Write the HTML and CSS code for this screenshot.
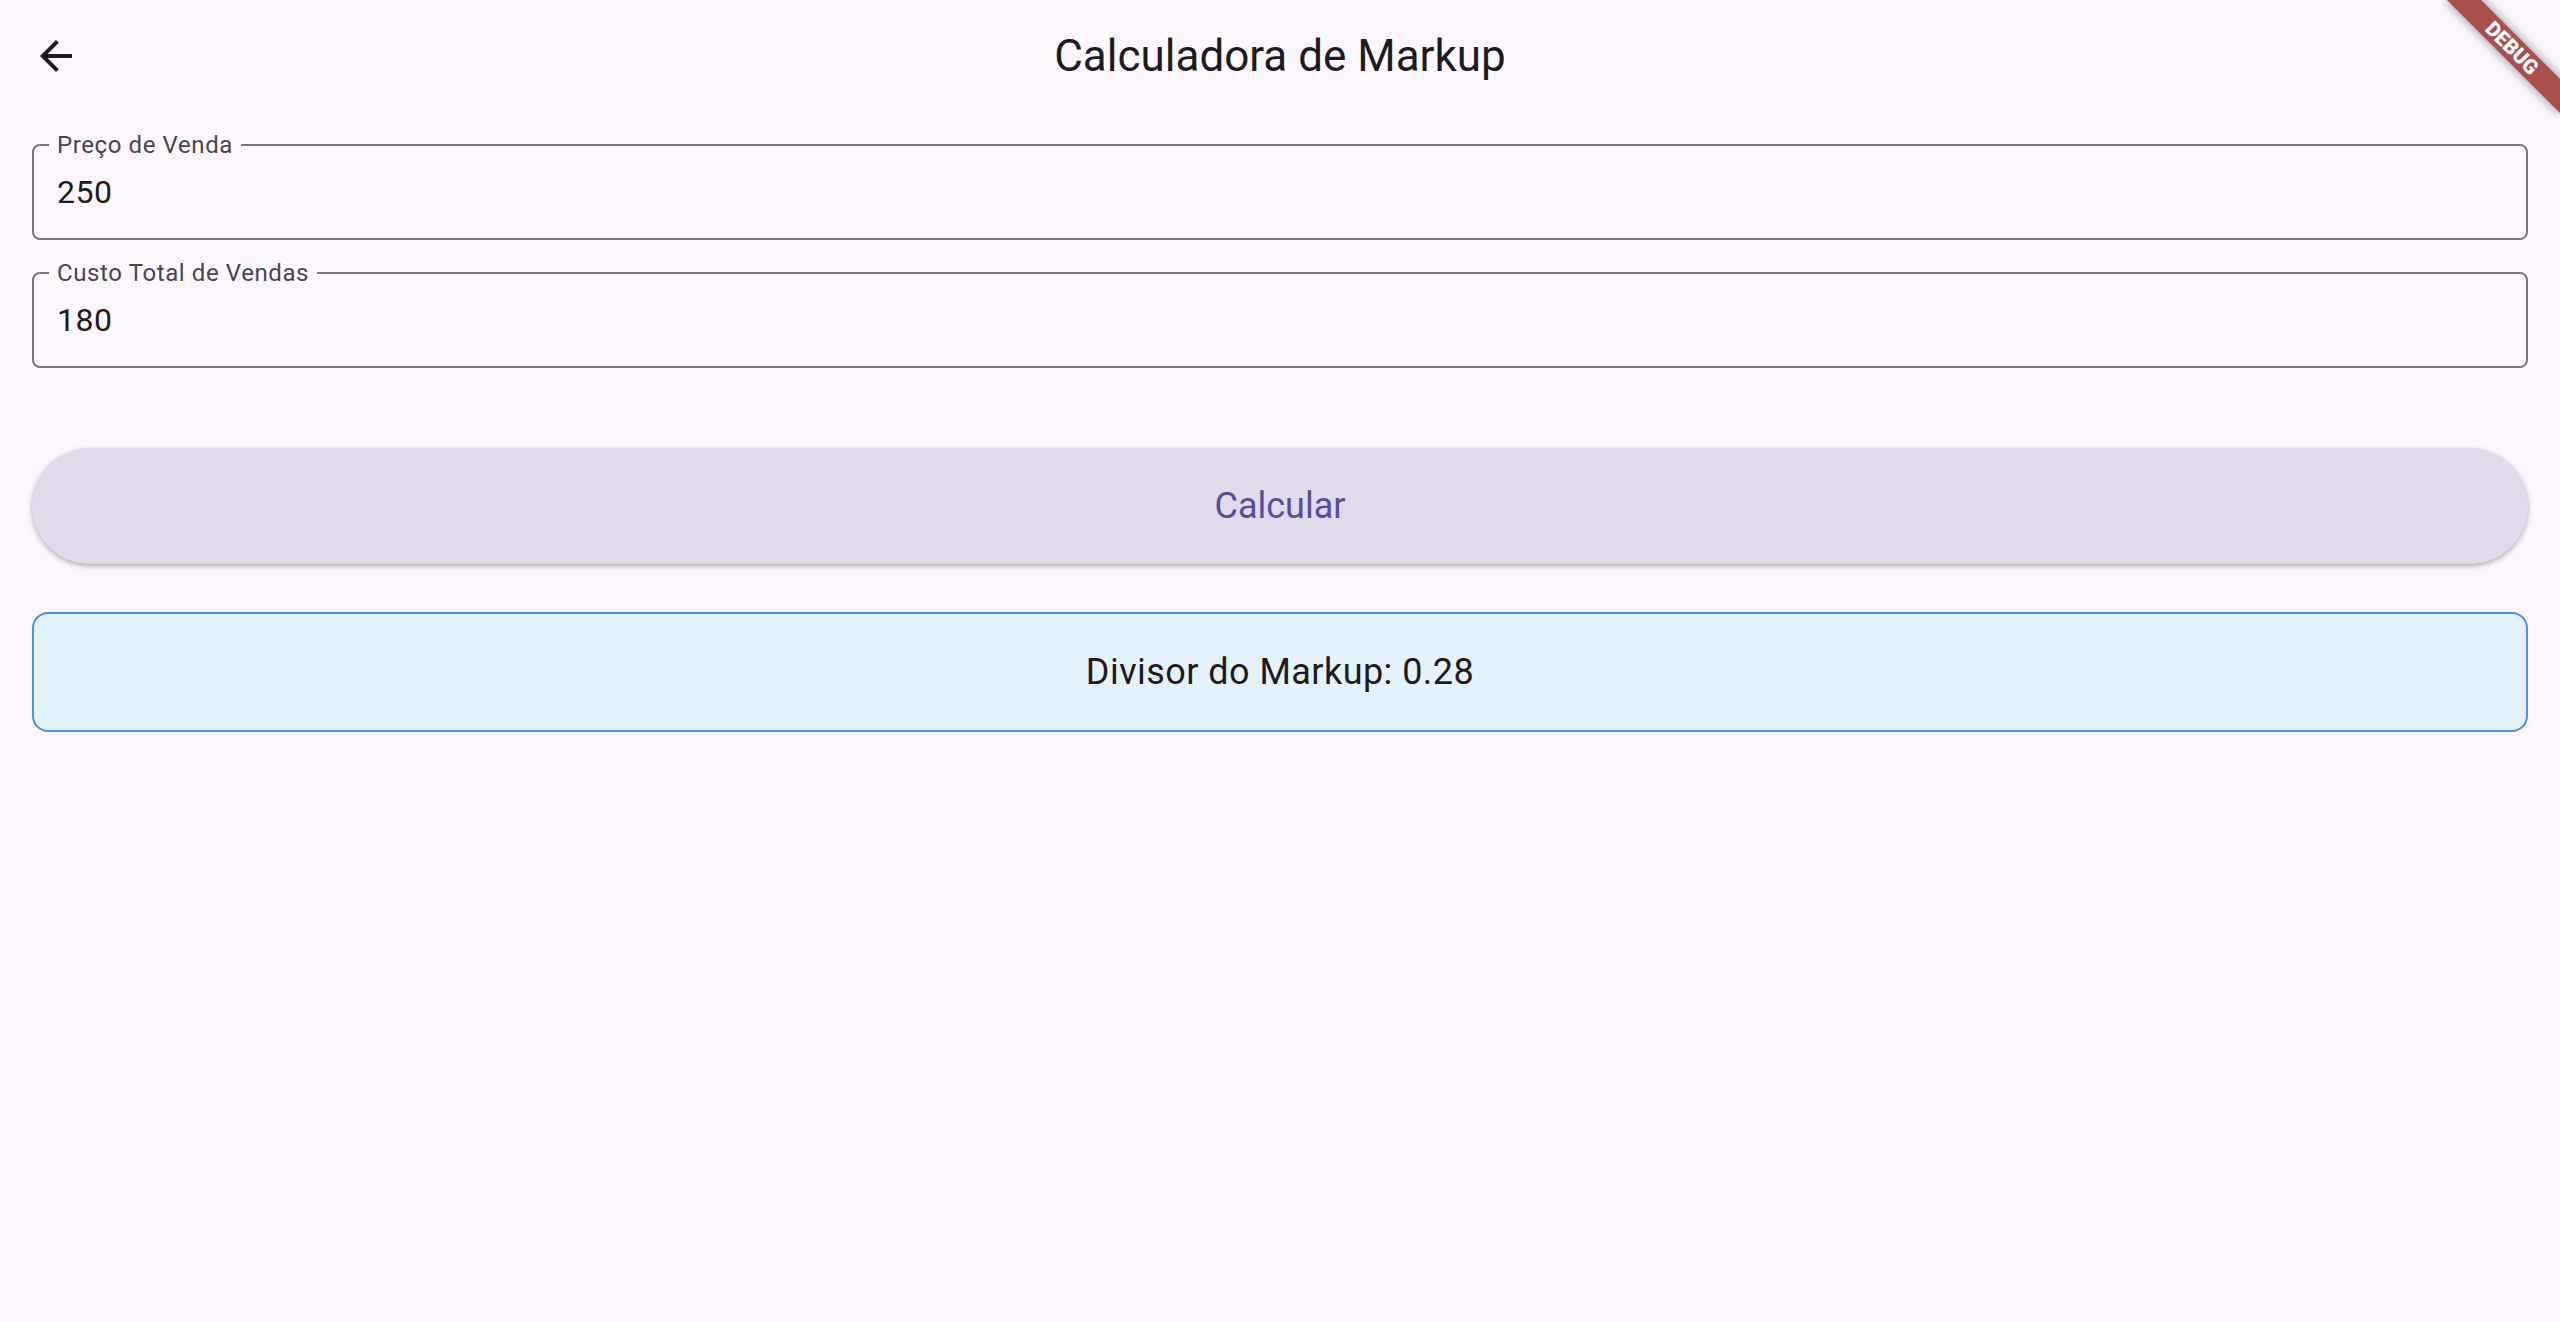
FILE: index.html
```html
<!DOCTYPE html>
<html lang="pt">
<head>
<meta charset="utf-8">
<title>Calculadora de Markup</title>
<link rel="stylesheet" href="styles.css">
</head>
<body>
<div class="app">
  <header class="appbar">
    <button class="back" aria-label="Voltar">
      <svg viewBox="0 0 24 24" width="48" height="48"><path d="M20 11H7.83l5.59-5.59L12 4l-8 8 8 8 1.41-1.41L7.83 13H20v-2z" fill="#1D1B20"/></svg>
    </button>
    <h1 class="title">Calculadora de Markup</h1>
    <div class="spacer"></div>
  </header>
  <main class="content">
    <div class="fields">
      <div class="field">
        <span class="field-label">Preço de Venda</span>
        <span class="field-value">250</span>
      </div>
      <div class="field">
        <span class="field-label">Custo Total de Vendas</span>
        <span class="field-value">180</span>
      </div>
    </div>
    <button class="calc">Calcular</button>
    <div class="result">Divisor do Markup: 0.28</div>
  </main>
  <div class="debug">DEBUG</div>
</div>
</body>
</html>
```
FILE: styles.css
```css
html, body {
  margin: 0;
  padding: 0;
  overflow: hidden;
}
body {
  background: #FEF7FF;
  font-family: Roboto, "Noto Sans", sans-serif;
  color: #1D1B20;
}
.app {
  position: relative;
  width: 2560px;
  height: 1322px;
  overflow: hidden;
}
.appbar {
  height: 112px;
  display: grid;
  grid-template-columns: 112px 1fr 112px;
  align-items: center;
}
.back {
  margin-left: 32px;
  width: 48px;
  height: 48px;
  padding: 0;
  border: 0;
  background: none;
  display: flex;
}
.title {
  margin: 0;
  text-align: center;
  font-size: 44px;
  font-weight: 400;
  line-height: 56px;
  color: #1D1B20;
}
.content {
  padding: 32px 32px 0;
  display: flex;
  flex-direction: column;
}
.fields {
  display: flex;
  flex-direction: column;
  gap: 32px;
}
.field {
  position: relative;
  height: 96px;
  box-sizing: border-box;
  border: 2px solid #79747E;
  border-radius: 8px;
  padding: 0 24px;
  display: flex;
  align-items: center;
}
.field-label {
  position: absolute;
  left: 15px;
  top: -1px;
  transform: translateY(-50%);
  padding: 0 8px;
  background: #FEF7FF;
  font-size: 24px;
  line-height: 32px;
  letter-spacing: 0.6px;
  color: #49454F;
}
.field-value {
  font-size: 32px;
  line-height: 48px;
  letter-spacing: 0.5px;
  color: #1D1B20;
  margin-left: -1px;
}
.calc {
  margin-top: 80px;
  height: 116px;
  border: 0;
  border-radius: 58px;
  background: #E0DAEA;
  color: #5C4C9F;
  font-family: Roboto, "Noto Sans", sans-serif;
  font-size: 36px;
  box-shadow: 0 2px 4px rgba(0,0,0,0.22), 0 3px 8px rgba(0,0,0,0.10);
}
.result {
  margin-top: 48px;
  height: 120px;
  box-sizing: border-box;
  border: 2px solid #4A92E6;
  border-radius: 16px;
  background: #E4F2FC;
  display: flex;
  align-items: center;
  justify-content: center;
  font-size: 36px;
  letter-spacing: 0.45px;
  color: #1D1B20;
}
.debug {
  position: absolute;
  left: 2432px;
  top: 36px;
  width: 160px;
  height: 24px;
  transform: rotate(45deg);
  background: rgba(160, 60, 58, 0.9);
  box-shadow: 0 0 12px rgba(0,0,0,0.45);
  color: #fff;
  font-family: Roboto, "DejaVu Sans", sans-serif;
  font-weight: 900;
  font-size: 20.4px;
  line-height: 24px;
  text-align: center;
}
```
